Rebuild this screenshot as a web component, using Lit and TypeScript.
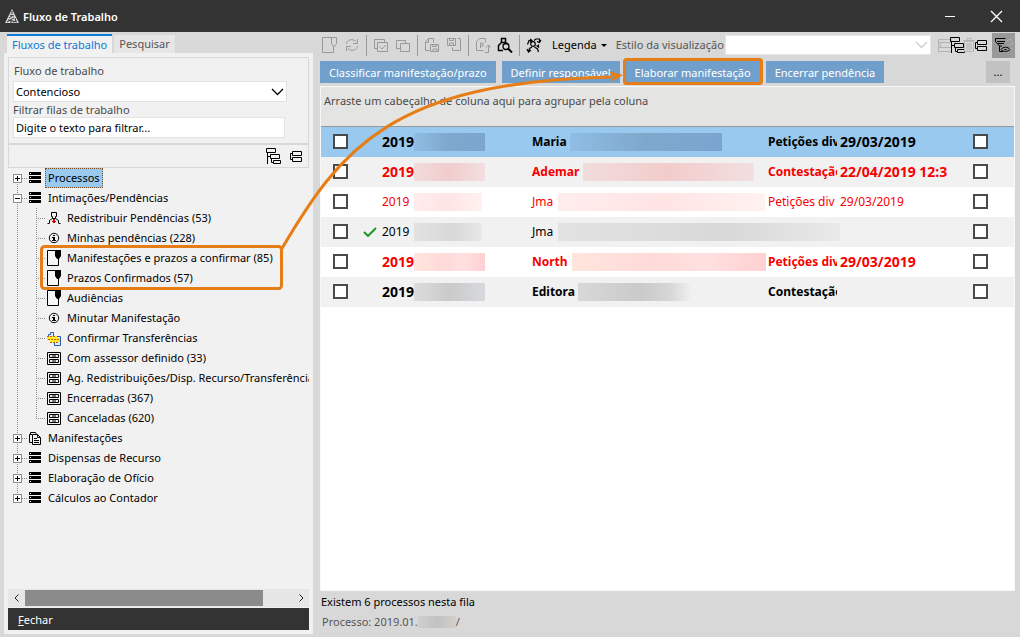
import { LitElement, html, css, svg, nothing } from "lit";
import { customElement, property, state } from "lit/decorators.js";
import { classMap } from "lit/directives/class-map.js";

const glyphs: Record<string, unknown> = {
  logo: svg`<path d="M7 0l7 14H0z" fill="#d8d8d8"/><path d="M7 2v3M5 6l4 1M4 9l3-2M9 9l-4 2M2 13l3-2M8 13l3-1M6 12v2M10 9l1 3M3 11l9 2" stroke="#333" stroke-width="1" fill="none"/>`,
  close: svg`<path d="M1 1l11 11M12 1L1 12" stroke="#fff" stroke-width="1.300" fill="none"/>`,
  minimize: svg`<path d="M0 5.500h10" stroke="#fff" fill="none"/>`,
  chevron: svg`<path d="M1 4l5.500 5.500L12 4" stroke="currentColor" fill="none" stroke-width="1.300"/>`,
  server: svg`<path d="M1 1h12v3H1zM1 5h12v3H1zM1 9h12v3H1z" fill="#000"/><path d="M2 2.500h1M2 6.500h1M2 10.500h1" stroke="#f1f1f1"/>`,
  person: svg`<path d="M4.500 1.500h5v4h-1v2h-3v-2h-1zM5.500 7.500L2.500 9.500V12M8.500 7.500L11.500 9.500V12M0.500 12.500h2M11.500 12.500h2" stroke="#000" fill="none"/><path d="M6 8h2v2h1v1H8v1H6v-1H5v-1h1z" fill="#d00000"/>`,
  info: svg`<circle cx="7" cy="7" r="4.700" stroke="#000" fill="none"/><path d="M5 6h3v3h1v1H5V9h1V7H5zM6 4h2v1H6z" fill="#000"/>`,
  page: svg`<path d="M.5.5h13v15H.5z" fill="#f6f6f6"/><path d="M8.500.5h-8v15h11V9" stroke="#000" fill="none"/><path d="M8 0h6v6l-2 3h-2L8 6z" fill="#000"/>`,
  transfer: svg`<path d="M1.500 7.500v-4h2v-2h3v5M8.500 5.500h5v9h-6v-3" stroke="#2f55b5" fill="#d9f0fb"/><path d="M0 5h10v2h3v4H3V9H0z" fill="#ffe81c"/><path d="M0 5.500h9M1 8.500h12M3 11.500h9" stroke="#c85d14" stroke-dasharray="2 1"/>`,
  drawers: svg`<path d="M.5 1.500h13v12H.5zM2.500 3.500h9v3h-9zM2.500 8.500h9v3h-9z" stroke="#000" fill="none"/><path d="M5 5h4M5 10h4" stroke="#000"/>`,
  documents: svg`<path d="M4.500 3.500h5l3 3v7h-8zM9.500 3.500v3h3M4 11.500H1.500v-8h2.500M2.500 3V1.500h5l1 2M6 7.500h3M6 9.500h5M6 11.500h5" stroke="#000" fill="none"/>`,
  expand: svg`<path d="M1.500.5h9v4h-9zM5.500 6.500h9v4h-9zM8.500 12.500h7v3h-7zM2.500 4.500V16M2.500 8.500h3M6.500 10.500v4h2" stroke="currentColor" fill="none"/>`,
  collapse: svg`<path d="M4.500 3.500h9v4h-9zM4.500 9.500h9v4h-9zM4.500 5.500h-2v6h2" stroke="currentColor" fill="none"/>`,
  note: svg`<path d="M9.500.5h-9v15h11V9M9.500.5h5v6l-2 3h-1l-2-3z" stroke="currentColor" fill="none"/>`,
  refresh: svg`<path d="M2.500 7c0-4 6-6 9.500-2.500M13.500 2v4.500H9M13.500 9c0 4-6 6-9.500 2.500M2.500 14V9.500H7" stroke="currentColor" fill="none"/>`,
  checkPages: svg`<path d="M4.500 5.500h10v9h-10zM4.500 11.500h-3v-9h10v3M6.500 9.500l2.500 2.500L13 8" stroke="currentColor" fill="none"/>`,
  copy: svg`<path d="M5.500 6.500h9v8h-9zM5.500 11.500h-4v-8h9v3" stroke="currentColor" fill="none"/>`,
  saveDoc: svg`<path d="M5.500 13.500h-4V5l3-3.500h5v4M4.500 2v3.500h-3M6.500 7.500h8v7h-8zM8.500 7.500v2h4v-2M9 14v-2h4v2" stroke="currentColor" fill="none"/>`,
  saveLink: svg`<path d="M1.500 1.500h8v7h-8zM3.500 1.500v2h4v-2M3.500 8V6h4v2M11.500 1.500h3v12h-8v-3" stroke="currentColor" fill="none"/>`,
  pageP: svg`<path d="M4.500 1.500h6v4M4.500 1.500l-3 3v9h7M5.500 11V6h2.500v3H5.500M10 15.500h3.500V8M11 10.500L13.500 8l2 2.500" stroke="currentColor" fill="none"/>`,
  search: svg`<path d="M4.500 1.500h4v4h-4zM4 6L1.500 8.500v5H6M9 6l2 1" stroke="currentColor" stroke-width="1.500" fill="none"/><circle cx="9" cy="9.500" r="3" stroke="currentColor" stroke-width="1.300" fill="none"/><path d="M11 11.500l4 4" stroke="currentColor" stroke-width="2"/>`,
  people: svg`<circle cx="7" cy="7" r="2.300" stroke="currentColor" stroke-width="1.200" fill="none"/><path d="M1.500 7.500L3 3.500h2.500M4 2l2 1.500L4 5.500M8 3.500l2-1.500h3.500v3M11 4.500l2.500 1L15 3M2.500 15l1-3.500L6 10M8.500 10l3 2 1 3M10.500 8.500l2 1.500V7.500M1 12l1.500 3L5 13" stroke="currentColor" stroke-width="1.200" fill="none"/>`,
  table: svg`<path d="M1.500 2.500h13v12h-13zM1.500 5.500h13M1.500 10.500h13M3.500 5v5" stroke="currentColor" fill="none"/>`,
  trash: svg`<path d="M3.500 4.500h9v10h-9zM2 3.500h12M6 3V1.500h4V3M6 6v7M8 6v7M10 6v7" stroke="currentColor" fill="none"/>`,
  filter: svg`<path d="M12 4l5-2 2 5-4 1M14 14l5-3" stroke="#b0b0b0" fill="none"/><path d="M11.500 1.500h-10v3l4 4.500H8M3 4.500h8M4 6.500h6M5.500 9v5.500H9" stroke="#000" fill="none"/><path d="M7 12.500c2-3 7-3 9 0-2 2.500-7 2.500-9 0zM10.500 12.500h2" stroke="#000" fill="none"/>`,
  tick: svg`<path d="M1 7l4 4 8-8" stroke="#109618" stroke-width="1.800" fill="none"/>`,
};

const icon = (name: string, size = 16, tall = size) =>
  html`<svg class="icon" width=${size} height=${tall} viewBox="0 0 ${size} ${tall}" aria-hidden="true">${glyphs[name]}</svg>`;

interface Node { label: string; icon: string; open?: boolean; children?: Node[]; }

const TREE: Node[] = [
  { label: "Processos", icon: "server" },
  {
    label: "Intimações/Pendências", icon: "server", open: true, children: [
      { label: "Redistribuir Pendências (53)", icon: "person" },
      { label: "Minhas pendências (228)", icon: "info" },
      { label: "Manifestações e prazos a confirmar (85)", icon: "page" },
      { label: "Prazos Confirmados (57)", icon: "page" },
      { label: "Audiências", icon: "page" },
      { label: "Minutar Manifestação", icon: "info" },
      { label: "Confirmar Transferências", icon: "transfer" },
      { label: "Com assessor definido (33)", icon: "drawers" },
      { label: "Ag. Redistribuições/Disp. Recurso/Transferências", icon: "drawers" },
      { label: "Encerradas (367)", icon: "drawers" },
      { label: "Canceladas (620)", icon: "drawers" },
    ],
  },
  { label: "Manifestações", icon: "documents" },
  { label: "Dispensas de Recurso", icon: "server" },
  { label: "Elaboração de Ofício", icon: "server" },
  { label: "Cálculos ao Contador", icon: "server" },
];

interface Row {
  number: string; name: string; type: string; date: string;
  bold?: boolean; red?: boolean; done?: boolean; tone: string; mask: number; nameMask: number; nameStart: number;
}

const ROWS: Row[] = [
  { number: "2019", name: "Maria", type: "Petições div", date: "29/03/2019", bold: true, tone: "blue", mask: 71, nameStart: 38, nameMask: 152 },
  { number: "2019", name: "Ademar", type: "Contestação", date: "22/04/2019 12:3", bold: true, red: true, tone: "rose", mask: 71, nameStart: 51, nameMask: 171 },
  { number: "2019", name: "Jma", type: "Petições div", date: "29/03/2019", red: true, tone: "pink", mask: 68, nameStart: 26, nameMask: 207 },
  { number: "2019", name: "Jma", type: "", date: "", done: true, tone: "gray", mask: 68, nameStart: 26, nameMask: 282 },
  { number: "2019", name: "North", type: "Petições div", date: "29/03/2019", bold: true, red: true, tone: "warm", mask: 71, nameStart: 40, nameMask: 194 },
  { number: "2019", name: "Editora", type: "Contestação", date: "", bold: true, tone: "dark", mask: 71, nameStart: 46, nameMask: 114 },
];

const shared = css`
  * { box-sizing: border-box; }
  button, select, input { font: inherit; color: inherit; margin: 0; border-radius: 0; }
  button { border: 0; padding: 0; background: none; white-space: nowrap; }
  .icon { display: block; flex: none; }
`;

@customElement("work-tree")
class WorkTree extends LitElement {
  @property({ attribute: false }) nodes: Node[] = [];
  @state() private selected = "Processos";

  static styles = [shared, css`
    :host { display: block; overflow: hidden; }
    ul { list-style: none; margin: 0; padding: 0; }
    .dots, .rail { background-image: repeating-linear-gradient(90deg, #8c8c8c 0 1px, transparent 1px 2px); }
    .rail {
      background-image: repeating-linear-gradient(#8c8c8c 0 1px, transparent 1px 2px);
      background-repeat: no-repeat; background-size: 1px calc(100% - 20px); background-position: 9px 10px;
    }
    .branch { background-position: 28px 0; background-size: 1px calc(100% - 10px); }
    .row { display: flex; align-items: center; height: 20px; white-space: nowrap; }
    .top { padding-left: 5px; }
    .leaf { padding-left: 28px; }
    .toggle {
      width: 9px; height: 9px; border: 1px solid #8c8c8c; flex: none;
      background: linear-gradient(#000, #000) center / 5px 1px no-repeat, #fff;
    }
    .closed {
      background: linear-gradient(#000, #000) center / 5px 1px no-repeat,
        linear-gradient(#000, #000) center / 1px 5px no-repeat, #fff;
    }
    .dots { height: 1px; width: 6px; flex: none; }
    .leaf .dots { width: 10px; margin-right: 1px; }
    .label { height: 20px; padding: 0 2px; margin-left: 3px; border: 1px dotted transparent; line-height: 18px; }
    .selected { background: #99c9ef; border-color: #7a4a20; }
  `];

  private label(n: Node) {
    return html`<button class=${classMap({ label: true, selected: this.selected === n.label })}
      @click=${() => (this.selected = n.label)}>${n.label}</button>`;
  }

  render() {
    return html`<ul class="rail">${this.nodes.map((n) => html`
      <li>
        <div class="row top">
          <button class=${classMap({ toggle: true, closed: !n.open })} aria-label=${"Alternar " + n.label}></button>
          <span class="dots"></span>${icon(n.icon, 14)}${this.label(n)}
        </div>
        ${n.open ? html`<ul class="rail branch">${n.children!.map((c) => html`
          <li class="row leaf"><span class="dots"></span>${icon(c.icon, 14, c.icon === "page" ? 16 : c.icon === "transfer" ? 15 : 14)}${this.label(c)}</li>`)}</ul>` : nothing}
      </li>`)}</ul>`;
  }
}

@customElement("work-sidebar")
class WorkSidebar extends LitElement {
  static styles = [shared, css`
    :host { display: flex; flex-direction: column; }
    .tabs { display: flex; align-items: flex-end; padding-left: 3px; height: 19px; }
    .tab { height: 18px; padding: 0 5px; background: #e6e6e6; color: #555; line-height: 18px; }
    .current { height: 19px; background: #f1f1f1; border-top: 2px solid #0a7bd6; color: #0a7bd6; line-height: 16px; margin-right: 2px; }
    .panel { flex: 1; min-height: 0; display: flex; flex-direction: column; background: #f1f1f1; padding: 4px; }
    .group { border: 1px solid #d8d8d8; padding: 4px 21px 5px 4px; display: grid; color: #4a4a4a; }
    .group label { line-height: 18px; height: 19px; padding-left: 1px; }
    .pick { position: relative; color: #000; }
    .pick .icon { position: absolute; right: 3px; top: 4px; pointer-events: none; }
    select, input { width: 100%; height: 21px; border: 1px solid #e2e2e2; background: #fff; color: #000; padding: 0 2px; outline: 0; appearance: none; display: block; }
    input::placeholder { color: #000; opacity: 1; }
    .group .second { height: 15px; line-height: 16px; padding: 0; }
    .filter { padding-right: 2px; }
    .tools { display: flex; justify-content: flex-end; align-items: center; gap: 7px; height: 24px; border: 1px solid #d8d8d8; padding-right: 4px; }
    work-tree { flex: 1; min-height: 0; }
    .scroll { display: flex; align-items: stretch; height: 18px; background: #e6e6e6; padding: 1px 0; margin-bottom: 1px; }
    .scroll button { width: 17px; display: grid; place-items: center; }
    .track { flex: 1; }
    .thumb { width: 89%; height: 100%; background: #8b8b8b; }
    .close { height: 22px; background: #333; color: #fff; text-align: left; padding: 2px 10px 0; }
  `];

  render() {
    return html`
      <div class="tabs" role="tablist">
        <button class="tab current" role="tab" aria-selected="true">Fluxos de trabalho</button>
        <button class="tab" role="tab" aria-selected="false">Pesquisar</button>
      </div>
      <div class="panel">
        <div class="group">
          <label for="flow">Fluxo de trabalho</label>
          <div class="pick"><select id="flow"><option>Contencioso</option></select>${icon("chevron", 13)}</div>
          <label class="second" for="filter">Filtrar filas de trabalho</label>
          <div class="filter"><input id="filter" type="text" placeholder="Digite o texto para filtrar..." /></div>
        </div>
        <div class="tools">
          <button aria-label="Expandir tudo">${icon("expand")}</button>
          <button aria-label="Recolher tudo">${icon("collapse")}</button>
        </div>
        <work-tree .nodes=${TREE}></work-tree>
        <div class="scroll">
          <button aria-label="Rolar para a esquerda"><svg class="icon" width="6" height="8" viewBox="0 0 6 8"><path d="M4.500.5L1 4l3.500 3.500" stroke="#222" fill="none"/></svg></button>
          <div class="track"><div class="thumb"></div></div>
          <button aria-label="Rolar para a direita"><svg class="icon" width="6" height="8" viewBox="0 0 6 8"><path d="M1.500.5L5 4 1.500 7.500" stroke="#222" fill="none"/></svg></button>
        </div>
        <button class="close"><u>F</u>echar</button>
      </div>`;
  }
}

@customElement("case-grid")
class CaseGrid extends LitElement {
  @property({ attribute: false }) rows: Row[] = [];

  static styles = [shared, css`
    :host { display: block; background: #fff; border: 1px solid #f8f8f8; overflow: hidden; }
    .grouping { height: 40px; background: #e4e4e3; color: #4a4a4a; border-bottom: 1px solid #999; line-height: 16px; padding: 6px 3px; }
    table { width: 100%; border-collapse: collapse; table-layout: fixed; font-size: 12px; }
    td { height: 30px; padding: 0 0 0 3px; white-space: nowrap; }
    tr:nth-child(even) { background: #f1f1f1; }
    .red { color: #f80000; }
    .bold { font-weight: 700; }
    .bold .figure { font-size: 14px; }
    tr.current { background: #99c9ef; }
    .c-pick { width: 40px; } .c-tick { width: 18px; } .c-num { width: 150px; }
    .c-type { width: 72px; } .c-date { width: 130px; } .c-end { width: 47px; }
    td.box { padding: 7px 0 0 12px; vertical-align: top; }
    td.end { padding-left: 6px; }
    .clip div { overflow: hidden; }
    td.mark { padding: 0 0 0 2px; }
    input { appearance: none; display: block; width: 15px; height: 15px; border: 2px solid #4a4a4a; background: #fff; }
    .cell { position: relative; display: flex; align-items: center; height: 30px; }
    .mask { position: absolute; left: 32px; height: 18px; z-index: 1; }
    .blue { background: linear-gradient(90deg, #8fbde3, #7ea8cb 50%, #7ba5d1); }
    .rose { background: linear-gradient(90deg, #f2dcdc, #f2cccc 50%, #f2dfe0); }
    .pink { background: linear-gradient(90deg, #ffeded, #ffe4e4 50%, #fff2f0); }
    .gray { background: linear-gradient(90deg, #e2e2e2, #d8d8d8 60%, #e9e9e9); }
    .warm { background: linear-gradient(90deg, #ffe6dc, #ffdada 40%, #ffe0e0 70%, #ffd0d2); }
    .dark { background: linear-gradient(90deg, #dcdcdc, #cacaca 50%, #d6d9dc); }
    .cell .fade { background: linear-gradient(90deg, #d8d8d8, #cacaca 55%, #d6d6d6 80%, #f1f1f1); }
  `];

  render() {
    return html`
      <div class="grouping">Arraste um cabeçalho de coluna aqui para agrupar pela coluna</div>
      <table>
        <colgroup><col class="c-pick"><col class="c-tick"><col class="c-num"><col><col class="c-type"><col class="c-date"><col class="c-end"></colgroup>
        <tbody>${this.rows.map((r, i) => html`
          <tr class=${classMap({ current: i === 0, red: !!r.red, bold: !!r.bold })}>
            <td class="box"><input type="checkbox" aria-label=${"Selecionar linha " + (i + 1)} /></td>
            <td class="mark">${r.done ? icon("tick", 14) : nothing}</td>
            <td><div class="cell figure">${r.number}<span class="mask ${r.tone}" style="width:${r.mask}px"></span></div></td>
            <td><div class="cell">${r.name}<span class="mask ${r.tone} ${i === 5 ? "fade" : ""}" style="left:${r.nameStart}px;width:${r.nameMask}px"></span></div></td>
            <td class="clip"><div>${r.type}</div></td>
            <td class="figure">${r.date}</td>
            <td class="box end"><input type="checkbox" aria-label=${"Marcar linha " + (i + 1)} /></td>
          </tr>`)}</tbody>
      </table>`;
  }
}

@customElement("app-root")
class AppRoot extends LitElement {
  static styles = [shared, css`
    :host {
      display: flex; flex-direction: column; position: relative; height: 100vh; min-height: 560px; overflow: hidden;
      background: #d8d8d8; color: #000; font: 11px/16px "Noto Sans", "Open Sans", sans-serif;
    }
    .title { display: flex; align-items: center; height: 32px; background: #333; color: #fff; padding: 0 17px 0 5px; font-weight: 600; gap: 4px; flex: none; }
    .title h1 { font: inherit; margin: 0; flex: 1; padding-top: 1px; }
    .title .minimize { margin-right: 30px; }
    .body { flex: 1; min-height: 0; display: grid; grid-template-columns: 309px 1fr; gap: 7px; padding: 2px 5px 3px 4px; }
    .main { display: flex; flex-direction: column; min-width: 0; }
    .toolbar { display: flex; align-items: center; gap: 6px; height: 22px; padding-left: 2px; color: #000; }
    .toolbar .off { color: #999; }
    .sep { width: 1px; height: 21px; background: #999; }
    .legend { display: flex; align-items: center; gap: 4px; margin-left: 4px; }
    .caret { border: 3px solid transparent; border-top-color: #000; border-bottom: 0; }
    .style { color: #555; margin-left: 3px; white-space: nowrap; }
    .pick { position: relative; flex: 1; margin-left: -5px; }
    .pick select { width: 100%; height: 20px; display: block; appearance: none; background: #fff; border: 1px solid #e6e6e6; outline: 0; }
    .pick .icon { position: absolute; right: 3px; top: 3px; color: #ccc; }
    .views { display: flex; align-items: center; width: 78px; height: 25px; }
    .views button { margin-right: -4px; }
    .views .on { background: #999; width: 23px; height: 25px; margin: 0 0 0 auto; display: grid; place-items: center; }
    .faint { color: #b4b4b4; }
    .actions { display: flex; gap: 6px; padding: 5px 5px 3px 0; }
    .action { height: 22px; padding: 2px 9px 0; background: #719fcb; color: #fff; }
    .more { margin-left: auto; width: 24px; height: 22px; background: #c2c2c2; }
    case-grid { flex: 1; min-height: 0; }
    .status { padding: 1px 1px 3px; height: 43px; }
    .status p { margin: 0; display: flex; align-items: center; height: 20px; }
    .status .case { color: #555; padding-left: 1px; }
    .blot { width: 38px; height: 12px; background: linear-gradient(90deg, #cfcfcf, #c2c2c2 50%, #d2cfc9); }
    .notes { position: absolute; inset: 0; width: 100%; height: 100%; pointer-events: none; z-index: 3; }
  `];

  private tool(name: string, label: string, off = true) {
    return html`<button class=${classMap({ off })} aria-label=${label}>${icon(name)}</button>`;
  }

  render() {
    const sep = html`<span class="sep"></span>`;
    return html`
      <header class="title">
        ${icon("logo", 14)}<h1>Fluxo de Trabalho</h1>
        <button class="minimize" aria-label="Minimizar">${icon("minimize", 11)}</button>
        <button aria-label="Fechar janela">${icon("close", 13)}</button>
      </header>
      <div class="body">
        <work-sidebar></work-sidebar>
        <main class="main">
          <div class="toolbar">
            ${this.tool("note", "Nova nota")}${this.tool("refresh", "Atualizar")}${sep}
            ${this.tool("checkPages", "Marcar")}${this.tool("copy", "Copiar")}${sep}
            ${this.tool("saveDoc", "Salvar documento")}${this.tool("saveLink", "Salvar cópia")}${sep}
            ${this.tool("pageP", "Processo")}${this.tool("search", "Consultar", false)}${sep}
            ${this.tool("people", "Responsáveis", false)}
            <button class="legend">Legenda<span class="caret"></span></button>
            <label class="style" for="style">Estilo da visualização</label>
            <div class="pick"><select id="style"><option></option></select>${icon("chevron", 13)}</div>
            <div class="views">
              <button class="faint" aria-label="Tabela">${icon("table")}</button>
              <button aria-label="Expandir grupos">${icon("expand")}</button>
              <button class="faint" aria-label="Excluir">${icon("trash")}</button>
              <button aria-label="Recolher grupos">${icon("collapse")}</button>
              <button class="on" aria-label="Filtro">${icon("filter", 20, 16)}</button>
            </div>
          </div>
          <div class="actions">
            <button class="action">Classificar manifestação/prazo</button>
            <button class="action">Definir responsável</button>
            <button class="action">Elaborar manifestação</button>
            <button class="action">Encerrar pendência</button>
            <button class="more" aria-label="Mais ações">...</button>
          </div>
          <case-grid .rows=${ROWS}></case-grid>
          <footer class="status">
            <p>Existem 6 processos nesta fila</p>
            <p class="case">Processo: 2019.01.<span class="blot"></span>/</p>
          </footer>
        </main>
      </div>
      <svg class="notes" aria-hidden="true" fill="none" stroke="#e67e17" stroke-width="3">
        <rect x="41.500" y="246.500" width="240" height="42" rx="3"/>
        <rect x="624.500" y="59.500" width="137" height="24" rx="2"/>
        <path d="M281 250C340 150 390 82 612 77"/>
        <path d="M609 71l14 4-12 7 2-5z" fill="#e67e17" stroke="none"/>
      </svg>`;
  }
}
